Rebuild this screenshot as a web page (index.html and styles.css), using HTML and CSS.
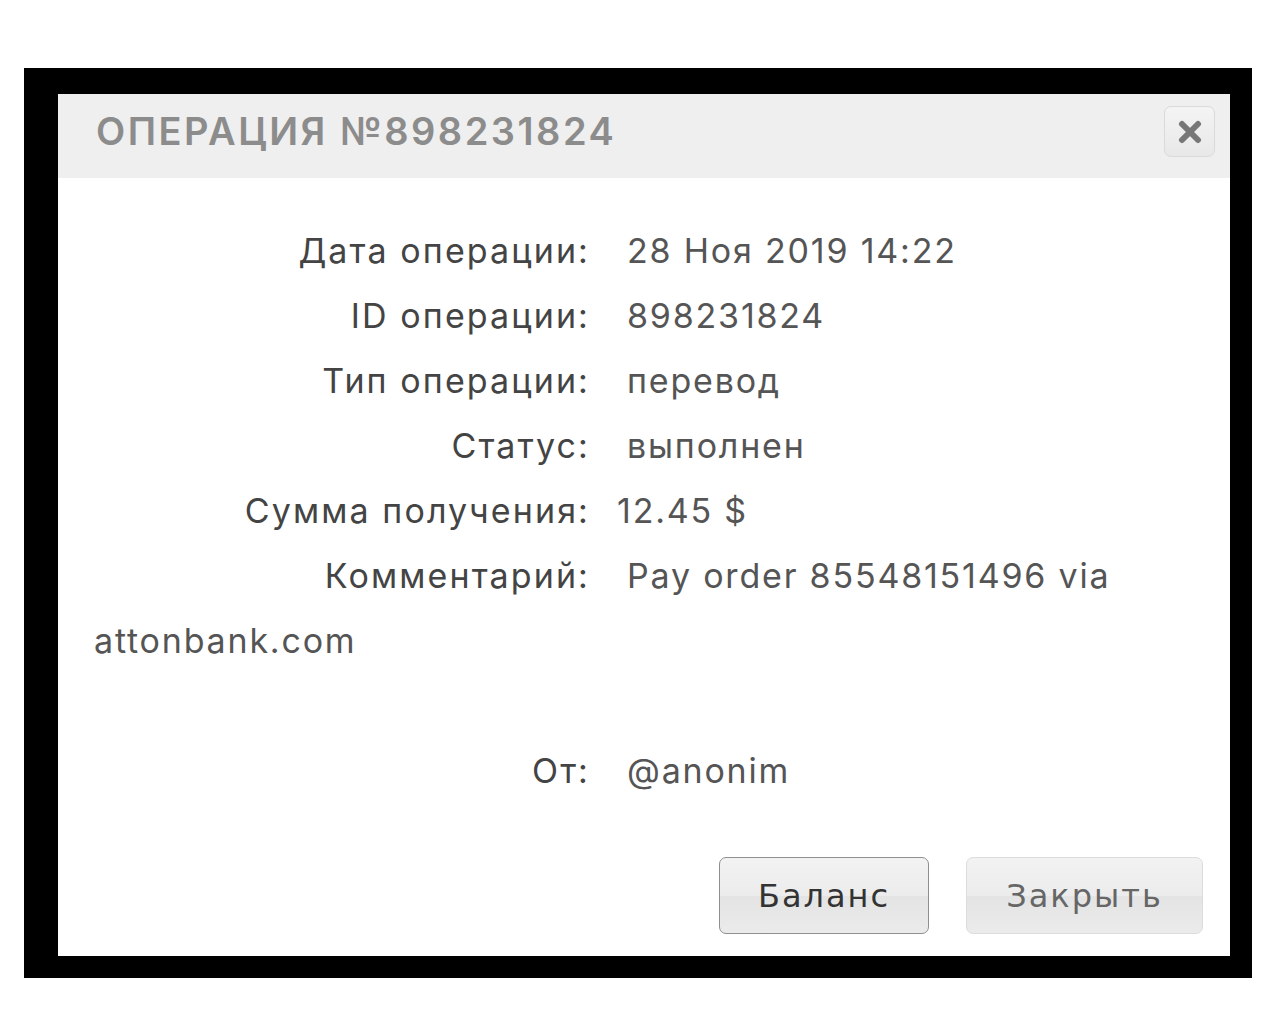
FILE: index.html
```html
<!doctype html>
<html>
  <head>
    <meta charset="UTF-8">
    <title>Операция №898231824</title>
    <link rel="stylesheet" href="styles.css">
  </head>
  <body>
    <div class="frame">
      <div class="dialog">
        <div class="dialog-head">
          <h2>Операция №898231824</h2>
          <button class="close" type="button" aria-label="Закрыть">
            <svg width="24" height="24" viewBox="0 0 24 24"><path d="M4 4 L20 20 M20 4 L4 20" stroke="#777" stroke-width="6" stroke-linecap="round"/></svg>
          </button>
        </div>
        <div class="dialog-body">
          <div class="row"><span class="label">Дата операции:</span>28 Ноя 2019 14:22</div>
          <div class="row"><span class="label">ID операции:</span>898231824</div>
          <div class="row"><span class="label">Тип операции:</span>перевод</div>
          <div class="row"><span class="label">Статус:</span>выполнен</div>
          <div class="row"><span class="label">Сумма получения:</span><span class="sum">12.45 $</span></div>
          <div class="row"><span class="label">Комментарий:</span>Pay order 85548151496 via attonbank.com</div>
          <div class="row empty"></div>
          <div class="row"><span class="label">От:</span>@anonim</div>
        </div>
        <div class="dialog-foot">
          <button class="btn btn-main" type="button">Баланс</button>
          <button class="btn" type="button">Закрыть</button>
        </div>
      </div>
    </div>
  </body>
</html>
```

FILE: styles.css
```css
body{
  margin: 0;
  background: #fff;
  font-family: Inter, "DejaVu Sans", sans-serif;
}
.frame{
  width: 1228px;
  margin: 68px 0 0 24px;
  padding: 26px 22px 22px 34px;
  box-sizing: border-box;
  background: #000;
}
.dialog{
  background: #fff;
}
.dialog-head{
  height: 84px;
  box-sizing: border-box;
  background: #efefef;
  display: flex;
  align-items: flex-start;
  justify-content: space-between;
  padding: 0 15px 0 38px;
}
.dialog-head h2{
  margin: 0;
  line-height: 74px;
  font-size: 38px;
  font-weight: 600;
  text-transform: uppercase;
  letter-spacing: 2.5px;
  color: #8c8c8c;
}
.close{
  margin-top: 12px;
  width: 51px;
  height: 51px;
  padding: 0;
  display: flex;
  align-items: center;
  justify-content: center;
  border: 1px solid #dadada;
  border-radius: 7px;
  background: linear-gradient(#f4f4f4, #e8e8e8);
  cursor: pointer;
}
.dialog-body{
  padding: 40px 36px 0 36px;
  font-size: 34px;
  letter-spacing: 1.8px;
  line-height: 65px;
  color: #555;
}
.row{
  min-height: 65px;
}
.label{
  display: inline-block;
  width: 496px;
  margin-right: 37px;
  text-align: right;
  letter-spacing: 2.1px;
  color: #444;
}
.sum{
  margin-left: -10px;
}
.dialog-foot{
  display: flex;
  justify-content: flex-end;
  gap: 37px;
  padding: 54px 27px 22px 0;
}
.btn{
  width: 237px;
  height: 77px;
  border: 1px solid #dcdcdc;
  border-radius: 7px;
  background: linear-gradient(#f2f2f2 0%, #ececec 50%, #e4e4e4 51%, #ebebeb 100%);
  font-family: "DejaVu Sans", sans-serif;
  font-size: 32px;
  letter-spacing: 2px;
  color: #666;
  cursor: pointer;
}
.btn-main{
  width: 210px;
  border-color: #8f8f8f;
  color: #333;
}
```
